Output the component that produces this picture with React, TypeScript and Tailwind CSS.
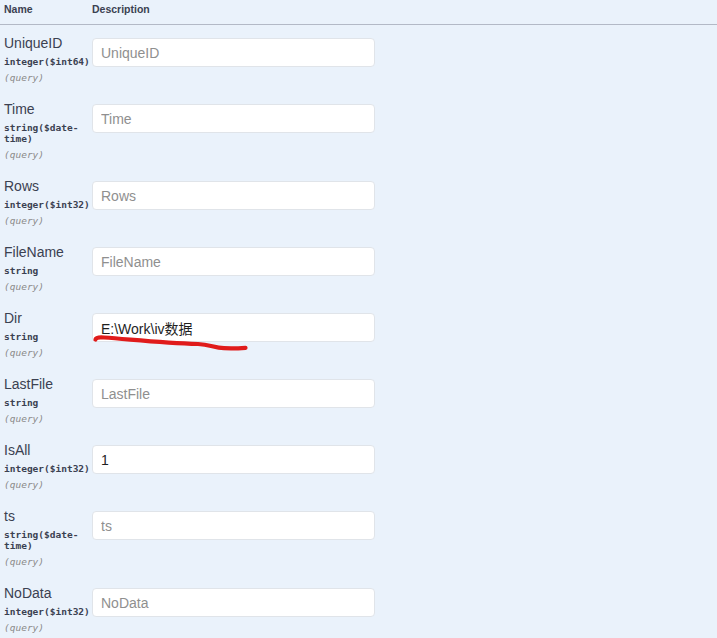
import { useState } from 'react';

type Param = {
  name: string;
  type: string;
  value?: string;
  mark?: boolean;
};

const PARAMS: Param[] = [
  { name: 'UniqueID', type: 'integer($int64)' },
  { name: 'Time', type: 'string($date-time)' },
  { name: 'Rows', type: 'integer($int32)' },
  { name: 'FileName', type: 'string' },
  { name: 'Dir', type: 'string', value: 'E:\\Work\\iv数据', mark: true },
  { name: 'LastFile', type: 'string' },
  { name: 'IsAll', type: 'integer($int32)', value: '1' },
  { name: 'ts', type: 'string($date-time)' },
  { name: 'NoData', type: 'integer($int32)' },
];

const SANS = 'font-["Liberation_Sans","Noto_Sans_CJK_SC",sans-serif]';

// hand-drawn red underline on the Dir value
function RedMark() {
  return (
    <svg
      className="absolute left-0 top-0 pointer-events-none"
      width="170"
      height="44"
      viewBox="0 0 170 44"
      fill="none"
    >
      <path
        d="M3.5 26.5 C4 24.6 6 24 12 24.5 C40 26.5 70 30 106 31 C118 31.5 122 34.8 132 35.2 C140 35.5 148 35.2 153.5 34.8"
        stroke="#e01b1b"
        strokeWidth="4.2"
        strokeLinecap="round"
      />
    </svg>
  );
}

function ParamRow({ p }: { p: Param }) {
  const [val, setVal] = useState(p.value ?? '');
  return (
    <div className="flex items-start pl-[4px]">
      <div className="w-[88px] shrink-0 text-[#3b4151]">
        <div className={`${SANS} text-[14px] leading-4`}>{p.name}</div>
        <div className='mt-[5px] font-["DejaVu_Sans_Mono",monospace] font-bold text-[9.5px] leading-[11px] break-words'>
          {p.type}
        </div>
        <div className='mt-[5px] font-["DejaVu_Sans_Mono",monospace] italic text-[9.5px] leading-[11px] text-[#8a8a8a]'>
          (query)
        </div>
      </div>
      <div className="relative mt-[3px]">
        <input
          value={val}
          onChange={(e) => setVal(e.target.value)}
          placeholder={p.name}
          className={`${SANS} block w-[283px] h-[29px] px-2 rounded-[4px] border border-[#e0e4e9] bg-white text-[14px] text-[#1f1f1f] placeholder:text-[#8f8f8f] outline-none`}
        />
        {p.mark && <RedMark />}
      </div>
    </div>
  );
}

export default function App() {
  return (
    <div className="min-h-screen w-full bg-[#eaf2fb]">
      <div className={`${SANS} h-[25px] flex items-start pl-[4px] pt-[3px] border-b border-[#b3b9c6] text-[10.5px] leading-3 font-bold text-[#3b4151]`}>
        <div className="w-[88px]">Name</div>
        <div>Description</div>
      </div>
      <div className="flex flex-col gap-[18px] pt-[10px]">
        {PARAMS.map((p) => (
          <ParamRow key={p.name} p={p} />
        ))}
      </div>
    </div>
  );
}
